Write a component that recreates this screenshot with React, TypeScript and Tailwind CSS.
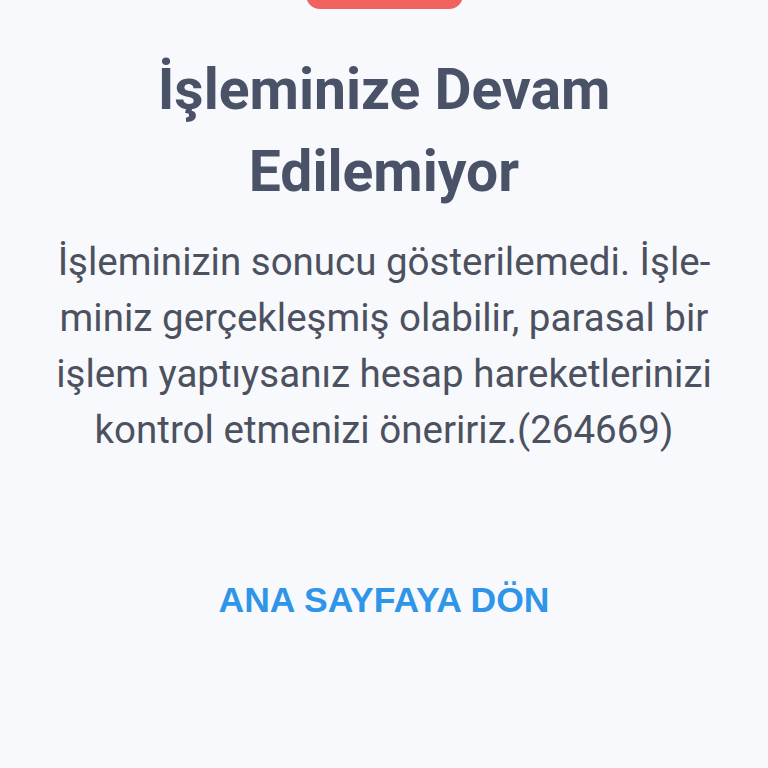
export default function App() {
  return (
    <div className="min-h-[768px] w-full bg-[#f8f9fc] flex flex-col items-center font-['Roboto',sans-serif] overflow-hidden">
      <div className="w-[157px] h-[40px] -mt-[31px] rounded-[14px] bg-[#f0625e]" />
      <h1 className="mt-[40px] text-center text-[57px] leading-[82px] font-bold text-[#4a5268]">
        İşleminize Devam
        <br />
        Edilemiyor
      </h1>
      <p className="mt-[21px] text-center text-[38.5px] leading-[56px] text-[#4c5160] whitespace-nowrap">
        İşleminizin sonucu gösterilemedi. İşle-
        <br />
        miniz gerçekleşmiş olabilir, parasal bir
        <br />
        işlem yaptıysanız hesap hareketlerinizi
        <br />
        kontrol etmenizi öneririz.(264669)
      </p>
      <button className="mt-[122px] text-[35.5px] leading-[40px] font-bold text-[#2f95e8] font-['Liberation_Sans',sans-serif]">
        ANA SAYFAYA DÖN
      </button>
    </div>
  );
}
